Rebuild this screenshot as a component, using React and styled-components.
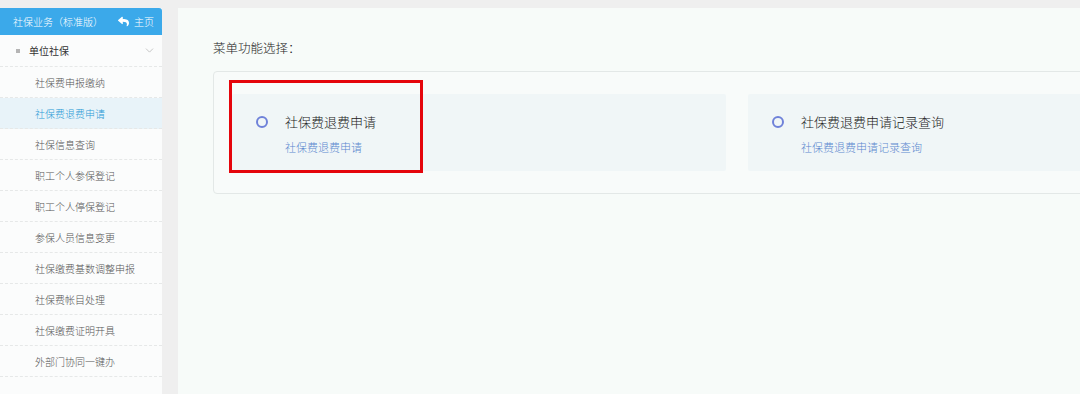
import React from 'react';
import styled, { createGlobalStyle } from 'styled-components';
import { FaReply } from 'react-icons/fa';
import { ChevronDown } from 'lucide-react';

const GlobalStyle = createGlobalStyle`
  html, body {
    margin: 0;
    padding: 0;
    background: #efefef;
    font-family: "Noto Sans CJK SC", "Noto Sans", sans-serif;
    overflow: hidden;
  }
`;

const subMenu = [
  '社保费申报缴纳',
  '社保费退费申请',
  '社保信息查询',
  '职工个人参保登记',
  '职工个人停保登记',
  '参保人员信息变更',
  '社保缴费基数调整申报',
  '社保费帐目处理',
  '社保缴费证明开具',
  '外部门协同一键办',
];

const functions = [
  { title: '社保费退费申请', desc: '社保费退费申请', marked: true },
  { title: '社保费退费申请记录查询', desc: '社保费退费申请记录查询' },
];

const App = () => {
  return (
    <>
      <GlobalStyle />
      <Page>
        <Sidebar>
          <SideHeader>
            <span>社保业务（标准版）</span>
            <HomeLink>
              <FaReply size={11} />
              主页
            </HomeLink>
          </SideHeader>
          <GroupRow>
            <Bullet />
            <GroupName>单位社保</GroupName>
            <ChevronDown size={13} strokeWidth={1.2} color="#a8a8a8" />
          </GroupRow>
          {subMenu.map((name, i) => (
            <SubItem key={name} active={i === 1}>
              {name}
            </SubItem>
          ))}
        </Sidebar>
        <Main>
          <Label>菜单功能选择：</Label>
          <Board>
            {functions.map((f) => (
              <FuncCard key={f.title}>
                {f.marked && <RedMark />}
                <Ring />
                <FuncText>
                  <FuncTitle>{f.title}</FuncTitle>
                  <FuncDesc>{f.desc}</FuncDesc>
                </FuncText>
              </FuncCard>
            ))}
          </Board>
        </Main>
      </Page>
    </>
  );
};

const Page = styled.div`
  display: flex;
  gap: 16px;
  padding-top: 8px;
  width: 1080px;
  height: 394px;
  box-sizing: border-box;
  overflow: hidden;
`;

const Sidebar = styled.div`
  width: 162px;
  flex-shrink: 0;
  background: #fbfcfc;
`;

const SideHeader = styled.div`
  height: 27px;
  background: #3ba9ea;
  border-top-right-radius: 3px;
  display: flex;
  align-items: center;
  justify-content: space-between;
  padding: 0 8px 0 13px;
  color: #fff;
  font-size: 10px;
  font-weight: 300;
`;

const HomeLink = styled.span`
  display: flex;
  align-items: center;
  gap: 5px;
`;

const GroupRow = styled.div`
  height: 32px;
  display: flex;
  align-items: center;
  padding: 0 6px 0 16px;
  border-bottom: 1px dashed #e6e8e8;
  box-sizing: border-box;
`;

const Bullet = styled.span`
  width: 4px;
  height: 4px;
  background: #b5b5b5;
  margin-right: 9px;
`;

const GroupName = styled.span`
  flex: 1;
  font-size: 10px;
  color: #333;
`;

const SubItem = styled.div`
  height: 31px;
  box-sizing: border-box;
  display: flex;
  align-items: center;
  padding-left: 35px;
  font-size: 10px;
  font-weight: 300;
  color: ${(p) => (p.active ? '#2a9ad6' : '#555')};
  background: ${(p) => (p.active ? '#e8f3f9' : 'transparent')};
  border-bottom: 1px dashed #e6e8e8;
`;

const Main = styled.div`
  flex: 1;
  min-width: 0;
  background: #f7fbf9;
  padding: 31px 0 0 35px;
`;

const Label = styled.div`
  font-size: 12.5px;
  font-weight: 300;
  color: #222;
  line-height: 18px;
  margin-bottom: 14px;
`;

const Board = styled.div`
  width: 1050px;
  border: 1px solid #e3e8e7;
  border-radius: 4px;
  padding: 22px 18px;
  display: flex;
  gap: 22px;
  background: #f8fbfa;
`;

const FuncCard = styled.div`
  position: relative;
  width: 494px;
  height: 77px;
  flex-shrink: 0;
  background: #f0f6f7;
  border-radius: 2px;
  display: flex;
  align-items: flex-start;
  padding: 20px 0 0 24px;
  box-sizing: border-box;
`;

const RedMark = styled.div`
  position: absolute;
  left: -3px;
  top: -14px;
  width: 194px;
  height: 93px;
  border: 3px solid #e5050c;
  box-sizing: border-box;
`;

const Ring = styled.span`
  width: 8px;
  height: 8px;
  border: 2px solid #6f82d9;
  border-radius: 50%;
  margin-top: 2px;
  margin-right: 17px;
`;

const FuncText = styled.div`
  display: flex;
  flex-direction: column;
  gap: 9px;
`;

const FuncTitle = styled.div`
  font-size: 13px;
  font-weight: 300;
  color: #222;
  line-height: 16px;
`;

const FuncDesc = styled.div`
  font-size: 11px;
  font-weight: 300;
  color: #5b88cf;
  line-height: 16px;
`;

export default App;
